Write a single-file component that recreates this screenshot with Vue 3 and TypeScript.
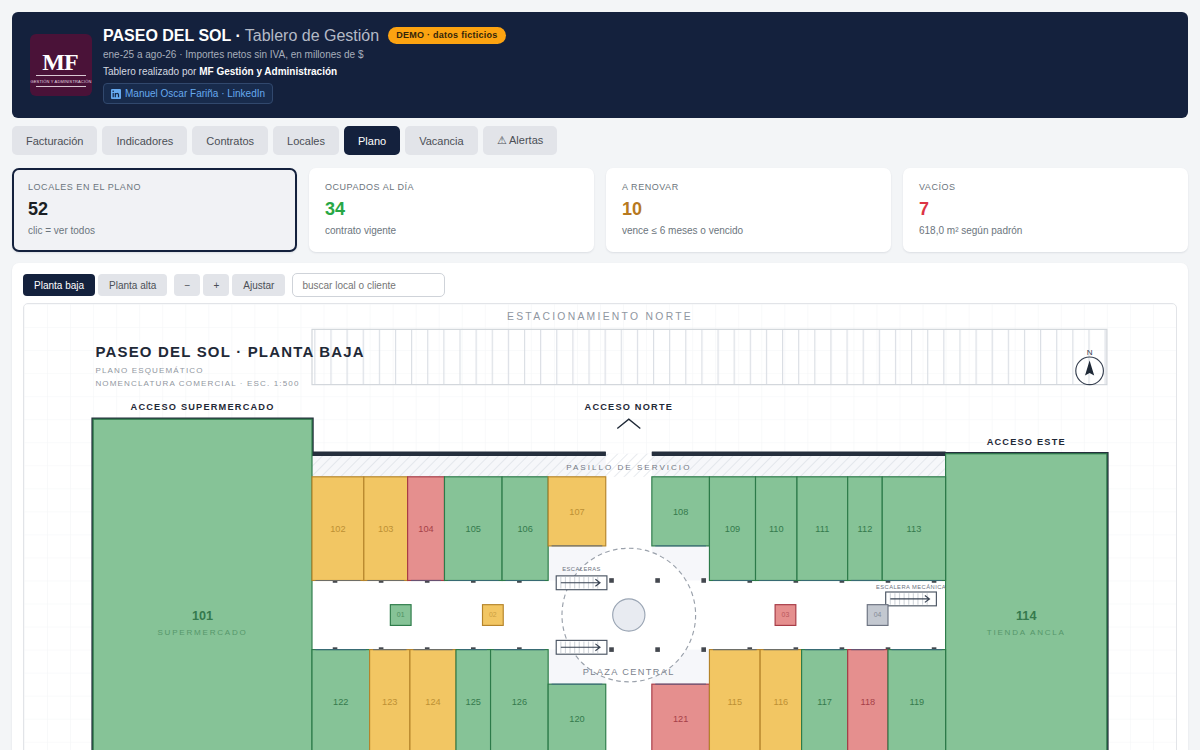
<script setup lang="ts">
import { computed, ref } from 'vue'

type Status = 'ok' | 'renew' | 'empty' | 'none'
interface Unit {
  id: string
  x: number
  y: number
  w: number
  h: number
  s: Status
  front?: 'top' | 'bottom'
  caption?: string
}

const tabs = ['Facturación', 'Indicadores', 'Contratos', 'Locales', 'Plano', 'Vacancia', '⚠ Alertas']
const activeTab = ref('Plano')

const stats = [
  { label: 'Locales en el plano', value: '52', note: 'clic = ver todos', tone: 'dark' },
  { label: 'Ocupados al día', value: '34', note: 'contrato vigente', tone: 'green' },
  { label: 'A renovar', value: '10', note: 'vence ≤ 6 meses o vencido', tone: 'amber' },
  { label: 'Vacíos', value: '7', note: '618,0 m² según padrón', tone: 'red' },
]
const activeStat = ref(0)

const floors = ['Planta baja', 'Planta alta']
const activeFloor = ref('Planta baja')
const query = ref('')

// Builds a run of adjoining units from its dividing lines.
function row(edges: number[], y: number, h: number, front: 'top' | 'bottom', items: [string, Status][]): Unit[] {
  return items.map(([id, s], i) => ({ id, s, x: edges[i], y, w: edges[i + 1] - edges[i], h, front }))
}

const units: Unit[] = [
  { id: '101', x: 60, y: 100, w: 190, h: 340, s: 'ok', caption: 'SUPERMERCADO' },
  { id: '114', x: 800, y: 130, w: 140, h: 280, s: 'ok', caption: 'TIENDA ANCLA' },
  ...row([250, 295, 333, 365, 415, 455], 150, 90, 'bottom', [['102', 'renew'], ['103', 'renew'], ['104', 'empty'], ['105', 'ok'], ['106', 'ok']]),
  ...row([455, 505], 150, 60, 'bottom', [['107', 'renew']]),
  ...row([545, 595], 150, 60, 'bottom', [['108', 'ok']]),
  ...row([595, 635, 671, 715, 745, 800], 150, 90, 'bottom', [['109', 'ok'], ['110', 'ok'], ['111', 'ok'], ['112', 'ok'], ['113', 'ok']]),
  ...row([250, 300, 335, 375, 405, 455], 300, 90, 'top', [['122', 'ok'], ['123', 'renew'], ['124', 'renew'], ['125', 'ok'], ['126', 'ok']]),
  ...row([455, 505], 330, 60, 'top', [['120', 'ok']]),
  ...row([545, 595], 330, 60, 'top', [['121', 'empty']]),
  ...row([595, 639, 675, 715, 750, 800], 300, 90, 'top', [['115', 'renew'], ['116', 'renew'], ['117', 'ok'], ['118', 'empty'], ['119', 'ok']]),
]

const kiosks: Unit[] = [
  { id: '01', x: 318, y: 261, w: 18, h: 18, s: 'ok' },
  { id: '02', x: 398, y: 261, w: 18, h: 18, s: 'renew' },
  { id: '03', x: 652, y: 261, w: 18, h: 18, s: 'empty' },
  { id: '04', x: 732, y: 261, w: 18, h: 18, s: 'none' },
]

const columns = [270, 310, 350, 390, 430, 510, 550, 590, 630, 670, 710, 750, 790]
const stairs = [{ x: 462, y: 236 }, { x: 462, y: 292 }, { x: 748, y: 250 }]

const zoom = ref(1)
const viewBox = computed(() => {
  const w = 1000 / zoom.value
  const h = 470 / zoom.value
  return `${(1000 - w) / 2} ${(470 - h) / 2} ${w} ${h}`
})
</script>

<template>
  <div class="page">
    <header class="banner">
      <svg class="logo" viewBox="0 0 62 62" aria-hidden="true">
        <rect width="62" height="62" rx="6" fill="#4a1238" />
        <text x="30" y="36" text-anchor="middle" class="logo-mark">MF</text>
        <path d="M6 41.500H56M6 52.500H56" stroke="#d9c8d3" stroke-width="1" />
        <text x="31" y="49" text-anchor="middle" class="logo-name">GESTIÓN Y ADMINISTRACIÓN</text>
      </svg>
      <div class="heading">
        <h1><b>PASEO DEL SOL ·</b> Tablero de Gestión <span class="badge">DEMO · datos ficticios</span></h1>
        <p class="period">ene-25 a ago-26 · Importes netos sin IVA, en millones de $</p>
        <p class="author">Tablero realizado por <b>MF Gestión y Administración</b></p>
        <a class="linkedin" href="#">
          <svg viewBox="0 0 10 10" aria-hidden="true">
            <rect width="10" height="10" rx="1" fill="#66a9ee" />
            <path d="M2.200 4V8.300M4.300 8.300V4M4.300 5.800C4.600 4.200 7.500 3.800 7.500 6V8.300" fill="none" stroke="#14284a" stroke-width="1.200" />
            <circle cx="2.200" cy="2.300" r=".8" fill="#14284a" />
          </svg>
          Manuel Oscar Fariña · LinkedIn
        </a>
      </div>
    </header>

    <nav class="tabs">
      <button v-for="t in tabs" :key="t" type="button" :class="{ on: t === activeTab }" @click="activeTab = t">{{ t }}</button>
    </nav>

    <section class="stats">
      <button v-for="(s, i) in stats" :key="s.label" type="button" class="stat" :class="{ on: i === activeStat }" @click="activeStat = i">
        <span class="label">{{ s.label }}</span>
        <strong :class="s.tone">{{ s.value }}</strong>
        <span class="note">{{ s.note }}</span>
      </button>
    </section>

    <main class="panel">
      <div class="tools">
        <div class="group">
          <button v-for="f in floors" :key="f" type="button" :class="{ on: f === activeFloor }" @click="activeFloor = f">{{ f }}</button>
        </div>
        <div class="group">
          <button type="button" class="step" aria-label="Alejar" @click="zoom = Math.max(1, zoom - 0.25)">−</button>
          <button type="button" class="step" aria-label="Acercar" @click="zoom += 0.25">+</button>
          <button type="button" @click="zoom = 1">Ajustar</button>
        </div>
        <input v-model="query" type="text" placeholder="buscar local o cliente" aria-label="Buscar local o cliente" />
      </div>

      <div class="map">
        <svg :viewBox="viewBox" role="img" aria-label="Plano de planta baja">
          <defs>
            <pattern id="grid" width="20" height="20" patternUnits="userSpaceOnUse">
              <path d="M20 0H0V20" fill="none" stroke="#f4f5f7" stroke-width="1" />
            </pattern>
            <pattern id="bays" width="14" height="60" patternUnits="userSpaceOnUse">
              <path d="M0 0V60" stroke="#dadee4" stroke-width="2" />
            </pattern>
            <pattern id="hatch" width="6" height="6" patternUnits="userSpaceOnUse" patternTransform="rotate(45)">
              <path d="M0 0V6" stroke="#d5dae1" stroke-width="1" />
            </pattern>
          </defs>

          <rect width="1000" height="470" fill="url(#grid)" />
          <text x="500" y="14" class="t parking">ESTACIONAMIENTO NORTE</text>
          <rect x="250" y="22" width="690" height="48" fill="url(#bays)" stroke="#d0d5da" />

          <g class="left">
            <text x="62" y="46" class="title">PASEO DEL SOL · PLANTA BAJA</text>
            <text x="62" y="60" class="sub">PLANO ESQUEMÁTICO</text>
            <text x="62" y="71" class="sub">NOMENCLATURA COMERCIAL · ESC. 1:500</text>
          </g>

          <g class="compass">
            <circle cx="925" cy="58" r="12" fill="none" stroke="#374151" />
            <path d="M925 49L929 62L925 60L921 62Z" fill="#1f2937" />
            <text x="925" y="44" class="t north">N</text>
          </g>

          <rect x="250" y="130" width="550" height="280" fill="#f6f7fa" />
          <rect x="250" y="240" width="550" height="60" fill="#fff" />
          <rect x="505" y="130" width="40" height="280" fill="#fff" />
          <rect x="250" y="130" width="550" height="20" fill="url(#hatch)" />
          <path class="wall" d="M505 130H250V100H60V440H250V410H505M545 130H940V410H545" />
          <path class="wall north-wall" d="M250 130H505M545 130H800" />
          <text x="525" y="144" class="t service">PASILLO DE SERVICIO</text>

          <circle cx="525" cy="270" r="58" fill="#fff" stroke="#9aa1ab" stroke-width="1" stroke-dasharray="4 3" />
          <circle cx="525" cy="270" r="14" fill="#e8ebf1" stroke="#9aa5b4" stroke-width="1" />
          <text x="525" y="322" class="t plaza">PLAZA CENTRAL</text>

          <g fill="#44484f">
            <template v-for="c in columns" :key="c">
              <rect :x="c - 2" y="238" width="4" height="4" />
              <rect :x="c - 2" y="298" width="4" height="4" />
            </template>
          </g>

          <g v-for="u in units" :key="u.id" :class="u.s">
            <rect class="room" :x="u.x" :y="u.y" :width="u.w" :height="u.h" />
            <line
              v-if="u.front"
              class="front"
              :x1="u.x + 3"
              :x2="u.x + u.w - 3"
              :y1="u.front === 'top' ? u.y : u.y + u.h"
              :y2="u.front === 'top' ? u.y : u.y + u.h"
            />
            <text class="t" :class="u.caption ? 'anchor' : 'number'" :x="u.x + u.w / 2" :y="u.caption ? 274 : u.y + u.h / 2 + 3">{{ u.id }}</text>
            <text v-if="u.caption" class="t caption" :x="u.x + u.w / 2" y="287">{{ u.caption }}</text>
          </g>

          <g v-for="s in stairs" :key="`${s.x}-${s.y}`">
            <rect :x="s.x" :y="s.y" width="44" height="12" fill="#fff" stroke="#4b5563" />
            <path v-for="n in 9" :key="n" :d="`M${s.x + n * 4} ${s.y + 1}v10`" stroke="#d3d7dc" />
            <path :d="`M${s.x + 4} ${s.y + 6}h34m-4 -3l4 3l-4 3`" fill="none" stroke="#374151" />
          </g>
          <text x="484" y="232" class="t stair">ESCALERAS</text>
          <text x="770" y="247" class="t stair">ESCALERA MECÁNICA</text>

          <g v-for="k in kiosks" :key="k.id" :class="k.s">
            <rect class="room" :x="k.x" :y="k.y" :width="k.w" :height="k.h" />
            <text class="t kiosk" :x="k.x + 9" :y="k.y + 11">{{ k.id }}</text>
          </g>

          <text x="155" y="92" class="t access">ACCESO SUPERMERCADO</text>
          <text x="525" y="92" class="t access">ACCESO NORTE</text>
          <text x="870" y="122" class="t access">ACCESO ESTE</text>
          <path d="M515 108L525 100L535 108" fill="none" stroke="#1f2937" stroke-width="1.200" />
        </svg>
      </div>
    </main>
  </div>
</template>

<style>
body {
  margin: 0;
  background: #f3f5f7;
}
</style>

<style scoped>
.page {
  box-sizing: border-box;
  padding: 12px;
  font-family: "Liberation Sans", Arial, sans-serif;
  font-size: 10px;
  color: #1b1f24;
}
button,
input {
  font: inherit;
}
button {
  border: 0;
  cursor: pointer;
}
.banner {
  display: flex;
  align-items: center;
  gap: 11px;
  box-sizing: border-box;
  min-height: 106px;
  padding: 13px 18px 14px;
  border-radius: 6px;
  background: #14213d;
  color: #fff;
}
.logo {
  width: 62px;
  height: 62px;
}
.logo-mark {
  font: bold 24px "Liberation Serif", serif;
  letter-spacing: -1px;
  fill: #fff;
}
.logo-name {
  font-size: 4px;
  letter-spacing: 0.04em;
  fill: #e6d9e2;
}
.heading {
  display: flex;
  flex-direction: column;
  align-items: flex-start;
}
h1 {
  display: flex;
  align-items: center;
  gap: 4px;
  margin: 0;
  font-size: 16px;
  font-weight: 400;
  line-height: 21px;
  color: #b4bac6;
}
h1 b,
.author b {
  color: #fff;
}
.badge {
  margin-left: 5px;
  padding: 0 8px;
  border-radius: 9px;
  background: #fca311;
  color: #33250a;
  font-size: 9px;
  font-weight: 700;
  line-height: 17px;
  letter-spacing: 0.03em;
}
p {
  margin: 0;
  line-height: 17px;
}
.period {
  color: #a7aebb;
}
.author {
  color: #d5d9e1;
}
.linkedin {
  display: flex;
  align-items: center;
  gap: 4px;
  margin-top: 3px;
  padding: 0 7px;
  border: 1px solid #31486d;
  border-radius: 4px;
  background: #182b4c;
  color: #66a9ee;
  line-height: 19px;
  text-decoration: none;
}
.linkedin svg {
  width: 10px;
  height: 10px;
}
.tabs {
  display: flex;
  gap: 5px;
  margin-top: 8px;
}
.tabs button {
  height: 29px;
  padding: 0 14px;
  border-radius: 5px;
  background: #e2e4e9;
  color: #4b4f56;
  font-size: 11px;
}
.tabs button.on,
.tools button.on {
  background: #14213d;
  color: #fff;
}
.stats {
  display: grid;
  grid-template-columns: repeat(4, 1fr);
  gap: 12px;
  margin-top: 13px;
}
.stat {
  display: flex;
  flex-direction: column;
  align-items: flex-start;
  padding: 10px 14px 12px;
  border: 2px solid transparent;
  border-radius: 7px;
  background: #fff;
  background-clip: border-box;
  box-shadow: 0 1px 2px rgba(20, 33, 61, 0.1);
  color: #6c757d;
  text-align: left;
}
.stat.on {
  border-color: #14213d;
  background: #f1f2f5;
}
.label {
  font-size: 9px;
  line-height: 14px;
  letter-spacing: 0.06em;
  text-transform: uppercase;
}
.stat strong {
  margin: 4px 0;
  font-size: 18px;
  line-height: 22px;
}
.note {
  line-height: 14px;
}
.dark {
  color: #1b1f24;
}
.green {
  color: #28a745;
}
.amber {
  color: #b7791f;
}
.red {
  color: #dc3545;
}
.panel {
  margin-top: 11px;
  padding: 10px 11px;
  border-radius: 7px;
  background: #fff;
  box-shadow: 0 1px 2px rgba(20, 33, 61, 0.1);
}
.tools {
  display: flex;
  align-items: center;
  gap: 7px;
}
.group {
  display: flex;
  gap: 3px;
}
.tools button {
  height: 22px;
  padding: 0 11px;
  border-radius: 4px;
  background: #e2e4e9;
  color: #4b4f56;
}
.tools .step {
  width: 26px;
  padding: 0;
}
.tools input {
  box-sizing: border-box;
  width: 153px;
  height: 24px;
  padding: 0 9px;
  border: 1px solid #cfd3d9;
  border-radius: 5px;
  outline: 0;
  color: #1b1f24;
}
.tools input::placeholder {
  color: #757575;
}
.map {
  margin-top: 6px;
  overflow: hidden;
  border: 1px solid #e2e4e8;
  border-radius: 5px;
}
.map svg {
  display: block;
  width: 100%;
}
.t {
  text-anchor: middle;
}
.title {
  font-size: 13px;
  font-weight: 700;
  letter-spacing: 0.08em;
  fill: #1f2937;
}
.sub {
  font-size: 7px;
  letter-spacing: 0.14em;
  fill: #9197a1;
}
.parking {
  font-size: 9px;
  letter-spacing: 0.22em;
  fill: #8f96a1;
}
.north {
  font-size: 7px;
  fill: #374151;
}
.service {
  font-size: 7px;
  letter-spacing: 0.25em;
  fill: #737a85;
}
.plaza {
  font-size: 8px;
  letter-spacing: 0.15em;
  fill: #7b828d;
}
.access {
  font-size: 8px;
  font-weight: 700;
  letter-spacing: 0.13em;
  fill: #1f2937;
}
.stair {
  font-size: 5px;
  letter-spacing: 0.08em;
  fill: #6b7280;
}
.number {
  font-size: 8px;
}
.anchor {
  font-size: 11px;
  font-weight: 700;
}
.caption {
  font-size: 7px;
  letter-spacing: 0.22em;
  opacity: 0.6;
}
.kiosk {
  font-size: 6px;
  opacity: 0.7;
}
.wall {
  fill: none;
  stroke: #252f3d;
  stroke-width: 3px;
}
.north-wall {
  stroke-width: 4px;
}
.room {
  stroke-width: 1px;
}
.front {
  stroke: #3f6190;
  stroke-width: 1px;
  opacity: 0.6;
}
.ok .room {
  fill: #86c397;
  stroke: #2c7a49;
}
.ok text {
  fill: #357a4d;
}
.renew .room {
  fill: #f2c663;
  stroke: #b5842a;
}
.renew text {
  fill: #bd9034;
}
.empty .room {
  fill: #e58f8e;
  stroke: #a63a45;
}
.empty text {
  fill: #a63f48;
}
.none .room {
  fill: #c3c8d0;
  stroke: #6b7280;
}
.none text {
  fill: #6b7280;
}
</style>
